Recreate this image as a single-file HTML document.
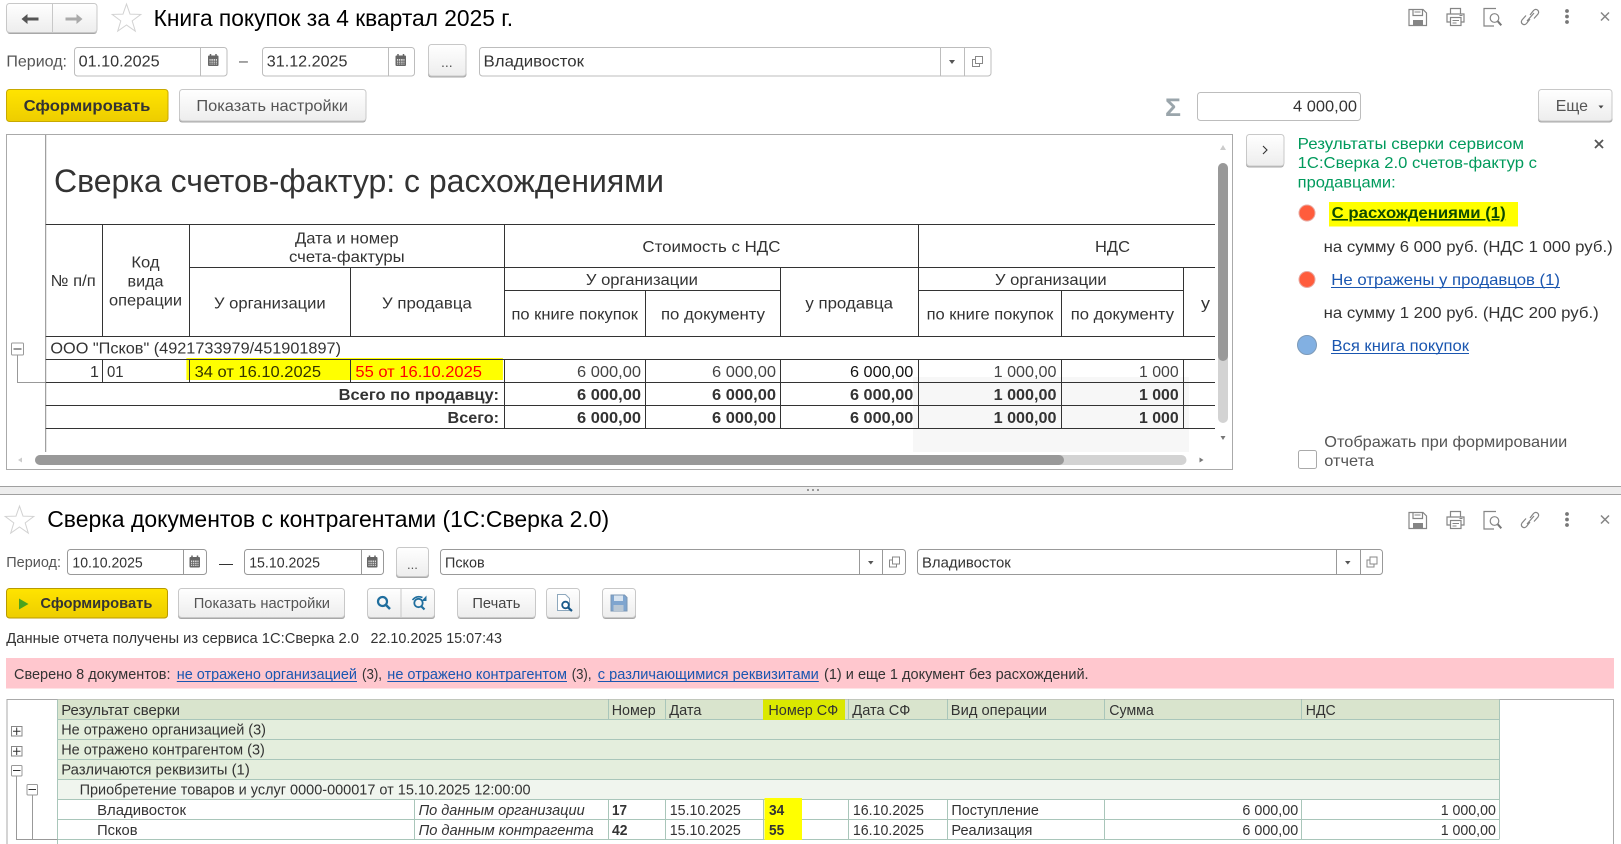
<!DOCTYPE html>
<html lang="ru"><head><meta charset="utf-8"><title>Книга покупок</title>
<style>
html,body{margin:0;padding:0;background:#fff;width:1621px;height:844px;overflow:hidden}
svg{display:block}
text{font-family:"Liberation Sans","Noto Sans CJK SC",sans-serif;font-size:16px;fill:#333;white-space:pre}
.t{font-size:23.5px;fill:#000}
.s{font-size:15px}
.b{font-weight:bold}
.g{fill:#555}
.d{fill:#444}
.l{fill:#1a56b0}
.gr{fill:#009a5c}
.btn{fill:url(#bg);stroke:#c8c8c8;stroke-width:1}
.sh{fill:#a8a8a8}
.f{fill:#fff;stroke:#bdbdbd;stroke-width:1}
.f2{fill:#fff;stroke:#999;stroke-width:1}
.ic{fill:none;stroke:#858585;stroke-width:1.2}
.k{stroke:#333;stroke-width:1;fill:none}
.m{stroke:#a9c6ba;stroke-width:1;fill:none}
.tr{stroke:#999;stroke-width:1;fill:none}
</style></head><body>
<svg width="1621" height="844" viewBox="0 0 1621 844" xmlns="http://www.w3.org/2000/svg">
<defs>
<linearGradient id="bg" x1="0" y1="0" x2="0" y2="1"><stop offset="0" stop-color="#fff"/><stop offset="1" stop-color="#ededed"/></linearGradient>
<linearGradient id="yb" x1="0" y1="0" x2="0" y2="1"><stop offset="0" stop-color="#ffe400"/><stop offset="1" stop-color="#edcd00"/></linearGradient>
<g id="star"><polygon points="0,-15 3.5,-4.9 14.3,-4.6 5.7,1.9 8.8,12.1 0,6 -8.8,12.1 -5.7,1.9 -14.3,-4.6 -3.5,-4.9" fill="#fff" stroke="#d2d2d2" stroke-width="1"/></g>
<g id="cal"><rect x="0" y="1.5" width="10.5" height="10.5" rx="1" fill="#666"/><rect x="1.5" y="5" width="7.5" height="5.5" fill="#ddd"/><path d="M2.5 0v3M8 0v3" stroke="#666" stroke-width="1.5"/><path d="M3 5v6M5.2 5v6M7.5 5v6M1.5 7.2h7.5M1.5 9.2h7.5" stroke="#666" stroke-width=".8"/></g>
<g id="copy"><path d="M3.5 0.5h7v7h-7z M3.5 3.5h-3v7h7v-3" fill="none" stroke="#888" stroke-width="1"/></g>
<g id="tools">
<path class="ic" d="M1409 9.500h14l3.500 3.500v12.500h-17.500z"/><path class="ic" d="M1413 9.500v6h9.500v-6"/><path d="M1414.500 12h6" stroke="#858585" stroke-width="1"/><rect x="1413" y="20" width="10" height="5.500" fill="#858585"/>
<path class="ic" d="M1450.500 14v-5.500h10v5.500M1450.500 22h-3.500v-8h17v8h-3.500"/><rect x="1450.500" y="17.500" width="10.500" height="8" fill="#fff" stroke="#858585" stroke-width="1.200"/><path d="M1452.500 20.500h6.500M1452.500 23h4" stroke="#858585"/><path d="M1459.500 15.500h3" stroke="#858585"/>
<path class="ic" d="M1496 8.500h-12v17.500h10"/><circle cx="1494.500" cy="18" r="4.300" class="ic"/><path d="M1497.800 21.300l3.500 4" stroke="#777" stroke-width="2"/>
<path class="ic" d="M1530 15l3.500-4.500q2-2 4-.5t.5 4l-4 4.500M1530 19l-3.500 4.500q-2 2-4 .5t-.5-4l4-4.500M1527 21l7-8"/>
<circle cx="1567" cy="11" r="1.900" fill="#777"/><circle cx="1567" cy="16.500" r="1.900" fill="#777"/><circle cx="1567" cy="22" r="1.900" fill="#777"/>
<path d="M1601 12.500l8 8M1609 12.500l-8 8" stroke="#858585" stroke-width="1.500"/>
</g>
<g id="mn"><rect x=".5" y=".5" width="12" height="12" rx="1" fill="#fff" stroke="#999"/><path d="M2.500 6.500h8" stroke="#333"/></g>
<g id="mn2"><rect x=".5" y=".5" width="10.500" height="10.500" rx="1" fill="#fff" stroke="#999"/><path d="M2 5.500h7.500" stroke="#333"/></g>
<g id="pl"><rect x=".5" y=".5" width="10.500" height="9.500" fill="#fff" stroke="#888"/><path d="M2 5.200h7.500M5.700 1.500v7.500" stroke="#333"/></g>
</defs>

<!-- TOP PANE -->
<rect class="sh" x="7" y="5" width="90" height="29" rx="3"/>
<rect class="btn" x="6.500" y="3.500" width="90.500" height="29" rx="3"/>
<path d="M52.500 4v28" stroke="#c8c8c8"/>
<path d="M21.500 19l6-5v3.500h11v3h-11v3.500z" fill="#555"/>
<path d="M82.500 19l-6-5v3.500h-11v3h11v3.500z" fill="#aaa"/>
<use href="#star" x="126.500" y="19"/>
<text class="t" x="153.600" y="26" textLength="359.500" lengthAdjust="spacingAndGlyphs">Книга покупок за 4 квартал 2025 г.</text>
<use href="#tools"/>

<text class="g" x="6.400" y="66.500" textLength="60.600" lengthAdjust="spacingAndGlyphs">Период:</text>
<rect class="f" x="74.500" y="47.500" width="152.500" height="28.500" rx="3"/><path d="M200.500 48v28" stroke="#bdbdbd"/><text x="78.600" y="66.700" textLength="81" lengthAdjust="spacingAndGlyphs">01.10.2025</text><use href="#cal" x="208" y="54"/>
<text x="239" y="66" class="g">–</text>
<rect class="f" x="262.500" y="47.500" width="152" height="28.500" rx="3"/><path d="M388.500 48v28" stroke="#bdbdbd"/><text x="266.800" y="66.700" textLength="80.700" lengthAdjust="spacingAndGlyphs">31.12.2025</text><use href="#cal" x="395.500" y="54"/>
<rect class="sh" x="428" y="46" width="38.500" height="31.500" rx="3"/><rect class="btn" x="428.500" y="44.500" width="37.500" height="31.500" rx="3"/><text x="441" y="67" class="g" style="font-size:14px">...</text>
<rect class="f" x="479.500" y="47.500" width="511.500" height="28.500" rx="3"/><path d="M940.500 48v28M964.500 48v28" stroke="#bdbdbd"/><text x="483.500" y="66.700" textLength="100.500" lengthAdjust="spacingAndGlyphs">Владивосток</text>
<path d="M949 60h6l-3 4z" fill="#555"/><use href="#copy" x="972" y="56"/>

<rect x="6.500" y="89.500" width="161.500" height="32" rx="3" fill="url(#yb)" stroke="#c8a900"/>
<text class="b" x="23.600" y="111" textLength="126.800" lengthAdjust="spacingAndGlyphs">Сформировать</text>
<rect class="sh" x="179" y="91" width="187" height="31.500" rx="3"/><rect class="btn" x="179.500" y="89.500" width="186.500" height="31.500" rx="3"/>
<text class="g" x="196.400" y="111" textLength="151.600" lengthAdjust="spacingAndGlyphs">Показать настройки</text>

<text x="1165" y="116" style="font-size:25px;font-weight:bold;fill:#9aa5ab" textLength="16" lengthAdjust="spacingAndGlyphs">Σ</text>
<rect class="f" x="1197.500" y="92.500" width="163" height="28" rx="3"/>
<text x="1293" y="111.700" textLength="64" lengthAdjust="spacingAndGlyphs">4 000,00</text>
<rect class="sh" x="1538" y="91" width="74.500" height="31.500" rx="3"/><rect class="btn" x="1538.500" y="89.500" width="73.500" height="31.500" rx="3"/>
<text x="1555.700" y="111" textLength="32.300" lengthAdjust="spacingAndGlyphs" class="g">Еще</text><path d="M1598.500 105.500h5l-2.500 3z" fill="#444"/>

<!-- report box -->
<rect x="6.500" y="134.500" width="1226" height="335" fill="#fff" stroke="#aaa"/>
<rect x="913" y="377" width="276" height="75" fill="#f7f7f7"/>
<path d="M45.700 135v317" stroke="#888"/>
<text x="54" y="192" style="font-size:32px" textLength="610" lengthAdjust="spacingAndGlyphs">Сверка счетов-фактур: с расхождениями</text>

<rect x="186.400" y="358" width="316.500" height="22" fill="#ff0"/>
<path class="k" d="M45.700 224.500H1215M189.500 267.500H1215M504.500 290.500H780.500M918.500 290.500H1183.500M45.700 336.500H1215M45.700 359.500H1215M45.700 382.500H1215M45.700 405.500H1215M45.700 428.500H1215"/>
<path class="k" d="M102.500 224v112.500M102.500 359.500v23M189.500 224v112.500M189.500 359.500v23M350.500 267v69.500M350.500 359.500v23M504.500 224v112.500M504.500 359.500v69M645.500 290v46.500M645.500 359.500v69M780.500 267v69.500M780.500 359.500v69M918.500 224v112.500M918.500 359.500v69M1061.500 290v46.500M1061.500 359.500v69M1183.500 267v69.500M1183.500 359.500v69"/>

<text x="295" y="243.300" textLength="103.600" lengthAdjust="spacingAndGlyphs">Дата и номер</text>
<text x="289" y="262" textLength="115.600" lengthAdjust="spacingAndGlyphs">счета-фактуры</text>
<text x="50.700" y="286" textLength="45" lengthAdjust="spacingAndGlyphs">№ п/п</text>
<text x="131.400" y="267.300" textLength="28.200" lengthAdjust="spacingAndGlyphs">Код</text>
<text x="127.500" y="286.300" textLength="36" lengthAdjust="spacingAndGlyphs">вида</text>
<text x="109" y="305.700" textLength="73" lengthAdjust="spacingAndGlyphs">операции</text>
<text x="214" y="308.300" textLength="111.700" lengthAdjust="spacingAndGlyphs">У организации</text>
<text x="382" y="308.300" textLength="89.800" lengthAdjust="spacingAndGlyphs">У продавца</text>
<text x="642.400" y="252" textLength="138" lengthAdjust="spacingAndGlyphs">Стоимость с НДС</text>
<text x="1095" y="252" textLength="35" lengthAdjust="spacingAndGlyphs">НДС</text>
<text x="585.900" y="285" textLength="112" lengthAdjust="spacingAndGlyphs">У организации</text>
<text x="995" y="285" textLength="111.600" lengthAdjust="spacingAndGlyphs">У организации</text>
<text x="511.500" y="319.300" textLength="126.500" lengthAdjust="spacingAndGlyphs">по книге покупок</text>
<text x="661" y="319.300" textLength="104" lengthAdjust="spacingAndGlyphs">по документу</text>
<text x="926.600" y="319.300" textLength="126.700" lengthAdjust="spacingAndGlyphs">по книге покупок</text>
<text x="1070.800" y="319.300" textLength="103.200" lengthAdjust="spacingAndGlyphs">по документу</text>
<text x="805.400" y="308.300" textLength="87.600" lengthAdjust="spacingAndGlyphs">у продавца</text>
<text x="1201" y="308.300" textLength="9" lengthAdjust="spacingAndGlyphs">у</text>

<text x="50.400" y="353.700" textLength="290.600" lengthAdjust="spacingAndGlyphs">ООО "Псков" (4921733979/451901897)</text>
<text x="90" y="377">1</text>
<text x="107" y="377" textLength="16.600" lengthAdjust="spacingAndGlyphs">01</text>
<text x="194.600" y="377" textLength="126.400" lengthAdjust="spacingAndGlyphs" style="fill:#333300">34 от 16.10.2025</text>
<text x="355.400" y="377" textLength="126.600" lengthAdjust="spacingAndGlyphs" style="fill:#f00">55 от 16.10.2025</text>
<text class="d" x="577" y="377" textLength="64" lengthAdjust="spacingAndGlyphs">6 000,00</text>
<text class="d" x="712" y="377" textLength="64" lengthAdjust="spacingAndGlyphs">6 000,00</text>
<text style="fill:#111" x="850" y="377" textLength="63.300" lengthAdjust="spacingAndGlyphs">6 000,00</text>
<text class="d" x="993.600" y="377" textLength="62.900" lengthAdjust="spacingAndGlyphs">1 000,00</text>
<text class="d" x="1139" y="377" textLength="39.700" lengthAdjust="spacingAndGlyphs">1 000</text>

<text class="b" x="338.600" y="400" textLength="160.400" lengthAdjust="spacingAndGlyphs">Всего по продавцу:</text>
<text class="b" x="447.500" y="423" textLength="51.500" lengthAdjust="spacingAndGlyphs">Всего:</text>
<text class="b" x="577" y="400" textLength="64" lengthAdjust="spacingAndGlyphs">6 000,00</text>
<text class="b" x="712" y="400" textLength="64" lengthAdjust="spacingAndGlyphs">6 000,00</text>
<text class="b" x="850" y="400" textLength="63.300" lengthAdjust="spacingAndGlyphs">6 000,00</text>
<text class="b" x="993.600" y="400" textLength="62.900" lengthAdjust="spacingAndGlyphs">1 000,00</text>
<text class="b" x="1139" y="400" textLength="39.700" lengthAdjust="spacingAndGlyphs">1 000</text>
<text class="b" x="577" y="423" textLength="64" lengthAdjust="spacingAndGlyphs">6 000,00</text>
<text class="b" x="712" y="423" textLength="64" lengthAdjust="spacingAndGlyphs">6 000,00</text>
<text class="b" x="850" y="423" textLength="63.300" lengthAdjust="spacingAndGlyphs">6 000,00</text>
<text class="b" x="993.600" y="423" textLength="62.900" lengthAdjust="spacingAndGlyphs">1 000,00</text>
<text class="b" x="1139" y="423" textLength="39.700" lengthAdjust="spacingAndGlyphs">1 000</text>

<path class="tr" d="M17.500 355v27.500H45.700"/>
<use href="#mn" x="11" y="342.500"/>

<rect x="1218" y="163" width="10" height="260" rx="5" fill="#d3d3d3"/>
<rect x="1218" y="163" width="10" height="198" rx="5" fill="#999"/>
<path d="M1223 145l3 5h-6z" fill="#ccc"/><path d="M1220.500 436h5l-2.500 4z" fill="#777"/>
<rect x="35" y="455" width="1151.500" height="10" rx="5" fill="#d3d3d3"/>
<rect x="35" y="455" width="1029" height="10" rx="5" fill="#999"/>
<path d="M18 460l4-2.500v5z" fill="#ccc"/><path d="M1203.500 460l-4-2.500v5z" fill="#777"/>

<!-- right panel -->
<rect class="sh" x="1246" y="135.500" width="38" height="32" rx="3"/><rect class="btn" x="1246.500" y="134.500" width="37.500" height="31.500" rx="3"/>
<path d="M1263 146l4 4-4 4" fill="none" stroke="#333" stroke-width="1.100"/>
<text class="gr" x="1297.700" y="149" textLength="226.300" lengthAdjust="spacingAndGlyphs">Результаты сверки сервисом</text>
<text class="gr" x="1297.700" y="168" textLength="239.300" lengthAdjust="spacingAndGlyphs">1С:Сверка 2.0 счетов-фактур с</text>
<text class="gr" x="1297.700" y="187.500" textLength="98" lengthAdjust="spacingAndGlyphs">продавцами:</text>
<path d="M1595 140l8 8M1603 140l-8 8" stroke="#555" stroke-width="1.800"/>
<circle cx="1307" cy="213" r="8" fill="#ff5c3c" stroke="#e8a8a0"/>
<rect x="1329" y="202" width="189" height="24.500" fill="#ff0"/>
<text class="b" x="1331.700" y="218" textLength="174" lengthAdjust="spacingAndGlyphs" style="fill:#0d4a00;text-decoration:underline">С расхождениями (1)</text>
<text x="1323.700" y="252" textLength="289" lengthAdjust="spacingAndGlyphs">на сумму 6 000 руб. (НДС 1 000 руб.)</text>
<circle cx="1307" cy="279.500" r="8" fill="#ff5c3c" stroke="#e8a8a0"/>
<text class="l" x="1331.300" y="285" textLength="228.700" lengthAdjust="spacingAndGlyphs">Не отражены у продавцов (1)</text><path d="M1331 287.500h229" stroke="#1a56b0"/>
<text x="1323.700" y="318" textLength="275" lengthAdjust="spacingAndGlyphs">на сумму 1 200 руб. (НДС 200 руб.)</text>
<circle cx="1307" cy="345" r="9.500" fill="#82b0e2" stroke="#7d9ab8"/>
<text class="l" x="1331.500" y="351" textLength="137.500" lengthAdjust="spacingAndGlyphs">Вся книга покупок</text><path d="M1331 353.500h138" stroke="#1a56b0"/>
<text class="g" x="1324.300" y="447" textLength="243" lengthAdjust="spacingAndGlyphs">Отображать при формировании</text>
<text class="g" x="1324.300" y="466" textLength="49.700" lengthAdjust="spacingAndGlyphs">отчета</text>
<rect x="1298.500" y="450.500" width="18" height="18" rx="2" fill="#fff" stroke="#aaa"/>

<!-- splitter -->
<rect x="0" y="486" width="1621" height="8.500" fill="#ededed"/>
<path d="M0 486.500h1621M0 494.500h1621" stroke="#a0a0a0"/>
<path d="M807 490h2M812 490h2M817 490h2" stroke="#999" stroke-width="2"/>

<!-- BOTTOM PANE -->
<use href="#star" x="19.500" y="521"/>
<text class="t" x="47.200" y="527" textLength="562" lengthAdjust="spacingAndGlyphs">Сверка документов с контрагентами (1С:Сверка 2.0)</text>
<use href="#tools" y="503"/>

<text class="s g" x="6.300" y="567" textLength="54.700" lengthAdjust="spacingAndGlyphs">Период:</text>
<rect class="f2" x="67.500" y="549.500" width="139" height="25" rx="3"/><path d="M183.500 550v24" stroke="#999"/><text class="s" x="72.400" y="567.300" textLength="70.300" lengthAdjust="spacingAndGlyphs">10.10.2025</text><use href="#cal" x="189.500" y="555.500"/>
<path d="M219 564.500h14" stroke="#333"/>
<rect class="f2" x="244.500" y="549.500" width="139" height="25" rx="3"/><path d="M361.500 550v24" stroke="#999"/><text class="s" x="249.200" y="567.300" textLength="70.800" lengthAdjust="spacingAndGlyphs">15.10.2025</text><use href="#cal" x="367" y="555.500"/>
<rect class="sh" x="396" y="549" width="33" height="29" rx="3"/><rect class="btn" x="396.500" y="547.500" width="32" height="29" rx="3"/><text x="407" y="569" class="g" style="font-size:13px">...</text>
<rect class="f2" x="440.500" y="549.500" width="465" height="25" rx="3"/><path d="M859.500 550v24M882.500 550v24" stroke="#999"/><text class="s" x="445" y="567.300" textLength="39.600" lengthAdjust="spacingAndGlyphs">Псков</text>
<path d="M868 561h5.500l-2.700 3.500z" fill="#555"/><use href="#copy" x="889" y="556.500"/>
<rect class="f2" x="917.500" y="549.500" width="465" height="25" rx="3"/><path d="M1336.500 550v24M1360.500 550v24" stroke="#999"/><text class="s" x="922" y="567.300" textLength="88.800" lengthAdjust="spacingAndGlyphs">Владивосток</text>
<path d="M1345 561h5.500l-2.700 3.500z" fill="#555"/><use href="#copy" x="1366.500" y="556.500"/>

<rect x="6.500" y="588.500" width="161" height="29.500" rx="3" fill="url(#yb)" stroke="#b89a00"/>
<path d="M19 598.500l9.500 5.500-9.500 5.500z" fill="#4aa31e"/>
<text class="s b" x="40.400" y="608" textLength="112" lengthAdjust="spacingAndGlyphs">Сформировать</text>
<rect class="sh" x="178" y="589.500" width="167" height="29.500" rx="3"/><rect class="btn" x="178.500" y="588.500" width="166" height="29" rx="3"/>
<text class="s g" x="193.700" y="608" textLength="136.300" lengthAdjust="spacingAndGlyphs">Показать настройки</text>
<rect class="sh" x="367.500" y="589.500" width="67.500" height="29.500" rx="3"/><rect class="btn" x="367.500" y="588.500" width="67" height="29" rx="3"/><path d="M401 589v28" stroke="#c8c8c8"/>
<circle cx="382.500" cy="601.500" r="4.500" fill="none" stroke="#1f6e9e" stroke-width="2.200"/><path d="M386 605l4 4" stroke="#1f6e9e" stroke-width="2.500"/>
<circle cx="418.500" cy="603" r="4.200" fill="none" stroke="#1f6e9e" stroke-width="1.800"/><path d="M421.500 606.500l3 3" stroke="#1f6e9e" stroke-width="2.200"/><path d="M412.500 600q4-5 10-2.500" fill="none" stroke="#1f6e9e" stroke-width="1.600"/><path d="M426.500 595.500v5.500h-5z" fill="#1f6e9e"/>
<rect class="sh" x="457.500" y="589.500" width="78" height="29.500" rx="3"/><rect class="btn" x="457.500" y="588.500" width="78" height="29" rx="3"/>
<text class="s" x="472.400" y="608" textLength="48" lengthAdjust="spacingAndGlyphs" style="fill:#444">Печать</text>
<rect class="sh" x="546.500" y="589.500" width="33.500" height="29.500" rx="3"/><rect class="btn" x="546.500" y="588.500" width="33" height="29" rx="3"/>
<path d="M557.500 594.500h8l4 4v12h-12z" fill="#fff" stroke="#8ea8bd"/><circle cx="565.500" cy="605" r="3.300" fill="#fff" stroke="#1a5a8a" stroke-width="1.800"/><path d="M568 607.500l4 3.500" stroke="#1a5a8a" stroke-width="2.200"/>
<rect class="sh" x="602.500" y="589.500" width="33.500" height="29.500" rx="3"/><rect class="btn" x="602.500" y="588.500" width="33" height="29" rx="3"/>
<path d="M611 595h13.500l2.500 2.500v13.500h-16z" fill="#7fa5cf" stroke="#7a96b4"/><rect x="614" y="595.500" width="9" height="5.500" fill="#d8e4f0"/><rect x="613.500" y="605" width="10" height="6" fill="#b9c7d4"/>

<text class="s" x="6.300" y="643" textLength="352.700" lengthAdjust="spacingAndGlyphs">Данные отчета получены из сервиса 1С:Сверка 2.0</text>
<text class="s" x="370.500" y="643" textLength="131.500" lengthAdjust="spacingAndGlyphs">22.10.2025 15:07:43</text>

<rect x="6" y="658" width="1608" height="30.500" fill="#ffc7ce"/>
<text class="s" x="14" y="679" textLength="156.500" lengthAdjust="spacingAndGlyphs">Сверено 8 документов:</text>
<text class="s l" x="176.800" y="679" textLength="180.200" lengthAdjust="spacingAndGlyphs">не отражено организацией</text><path d="M176.800 681.500h180.200" stroke="#1a56b0"/>
<text class="s" x="362" y="679" textLength="20" lengthAdjust="spacingAndGlyphs">(3),</text>
<text class="s l" x="387.300" y="679" textLength="179.700" lengthAdjust="spacingAndGlyphs">не отражено контрагентом</text><path d="M387.300 681.500h179.700" stroke="#1a56b0"/>
<text class="s" x="571.700" y="679" textLength="19.800" lengthAdjust="spacingAndGlyphs">(3),</text>
<text class="s l" x="597.800" y="679" textLength="221" lengthAdjust="spacingAndGlyphs">с различающимися реквизитами</text><path d="M597.800 681.500h221" stroke="#1a56b0"/>
<text class="s" x="824" y="679" textLength="264.600" lengthAdjust="spacingAndGlyphs">(1) и еще 1 документ без расхождений.</text>

<!-- bottom table -->
<path d="M7 844V699.500H1613.500V844" fill="none" stroke="#aaa"/>
<rect x="57.500" y="699.500" width="1441.500" height="20" fill="#d9e4cd"/>
<rect x="57.500" y="719.500" width="1441.500" height="60" fill="#e4eedd"/>
<rect x="57.500" y="779.500" width="1441.500" height="20" fill="#f0f5ee"/>
<path class="m" d="M57.500 719.500H1499M57.500 739.500H1499M57.500 759.500H1499M57.500 779.500H1499M57.500 799.500H1499M57.500 819.500H1499M57.500 839.500H1499"/>
<path class="m" d="M57.500 699.500V844M608.500 699.500v20M665.500 699.500v20M763.500 699.500v20M848.500 699.500v20M947.500 699.500v20M1104.500 699.500v20M1301.500 699.500v20M1499.500 699.500v140M414.500 799.500v40M608.500 799.500v40M665.500 799.500v40M763.500 799.500v40M848.500 799.500v40M947.500 799.500v40M1104.500 799.500v40M1301.500 799.500v40"/>
<rect x="763" y="699.500" width="82" height="20.500" fill="#dbe800"/>
<rect x="764.500" y="798" width="37.500" height="42" fill="#ff0"/>

<text class="s" x="61.200" y="715" textLength="118.800" lengthAdjust="spacingAndGlyphs">Результат сверки</text>
<text class="s" x="611.700" y="715" textLength="44" lengthAdjust="spacingAndGlyphs">Номер</text>
<text class="s" x="669.200" y="715" textLength="32.300" lengthAdjust="spacingAndGlyphs">Дата</text>
<text class="s" x="768.400" y="715" textLength="69.800" lengthAdjust="spacingAndGlyphs">Номер СФ</text>
<text class="s" x="852.300" y="715" textLength="58.100" lengthAdjust="spacingAndGlyphs">Дата СФ</text>
<text class="s" x="950.800" y="715" textLength="96.200" lengthAdjust="spacingAndGlyphs">Вид операции</text>
<text class="s" x="1109.300" y="715" textLength="44.500" lengthAdjust="spacingAndGlyphs">Сумма</text>
<text class="s" x="1305.800" y="715" textLength="29.900" lengthAdjust="spacingAndGlyphs">НДС</text>

<text class="s" x="61.200" y="734.700" textLength="204.800" lengthAdjust="spacingAndGlyphs">Не отражено организацией (3)</text>
<text class="s" x="61.200" y="754.700" textLength="203.700" lengthAdjust="spacingAndGlyphs">Не отражено контрагентом (3)</text>
<text class="s" x="61.200" y="774.700" textLength="188.600" lengthAdjust="spacingAndGlyphs">Различаются реквизиты (1)</text>
<text class="s" x="79.600" y="794.700" textLength="451" lengthAdjust="spacingAndGlyphs">Приобретение товаров и услуг 0000-000017 от 15.10.2025 12:00:00</text>

<text class="s" x="97.100" y="815" textLength="88.900" lengthAdjust="spacingAndGlyphs">Владивосток</text>
<text class="s" x="97.100" y="835" textLength="40.400" lengthAdjust="spacingAndGlyphs">Псков</text>
<text class="s" x="418.600" y="815" textLength="166.100" lengthAdjust="spacingAndGlyphs" style="font-style:italic">По данным организации</text>
<text class="s" x="418.600" y="835" textLength="175" lengthAdjust="spacingAndGlyphs" style="font-style:italic">По данным контрагента</text>
<text class="s b" x="612" y="815" textLength="15" lengthAdjust="spacingAndGlyphs">17</text>
<text class="s b" x="612" y="835" textLength="15.500" lengthAdjust="spacingAndGlyphs">42</text>
<text class="s" x="669.800" y="815" textLength="71" lengthAdjust="spacingAndGlyphs">15.10.2025</text>
<text class="s" x="669.800" y="835" textLength="71" lengthAdjust="spacingAndGlyphs">15.10.2025</text>
<text class="s b" x="769" y="815" textLength="15.200" lengthAdjust="spacingAndGlyphs">34</text>
<text class="s b" x="769" y="835" textLength="15.200" lengthAdjust="spacingAndGlyphs">55</text>
<text class="s" x="852.900" y="815" textLength="71" lengthAdjust="spacingAndGlyphs">16.10.2025</text>
<text class="s" x="852.900" y="835" textLength="71" lengthAdjust="spacingAndGlyphs">16.10.2025</text>
<text class="s" x="951.400" y="815" textLength="87.500" lengthAdjust="spacingAndGlyphs">Поступление</text>
<text class="s" x="951.400" y="835" textLength="81" lengthAdjust="spacingAndGlyphs">Реализация</text>
<text class="s" x="1242.400" y="815" textLength="55.800" lengthAdjust="spacingAndGlyphs">6 000,00</text>
<text class="s" x="1242.400" y="835" textLength="55.800" lengthAdjust="spacingAndGlyphs">6 000,00</text>
<text class="s" x="1440.700" y="815" textLength="55.200" lengthAdjust="spacingAndGlyphs">1 000,00</text>
<text class="s" x="1440.700" y="835" textLength="55.200" lengthAdjust="spacingAndGlyphs">1 000,00</text>

<path class="tr" d="M16.500 766V839.500H57.500M32.500 795V839.500"/>
<use href="#pl" x="11" y="726"/>
<use href="#pl" x="11" y="746"/>
<use href="#mn2" x="11" y="765"/>
<use href="#mn2" x="26.500" y="784"/>
</svg>
</body></html>
